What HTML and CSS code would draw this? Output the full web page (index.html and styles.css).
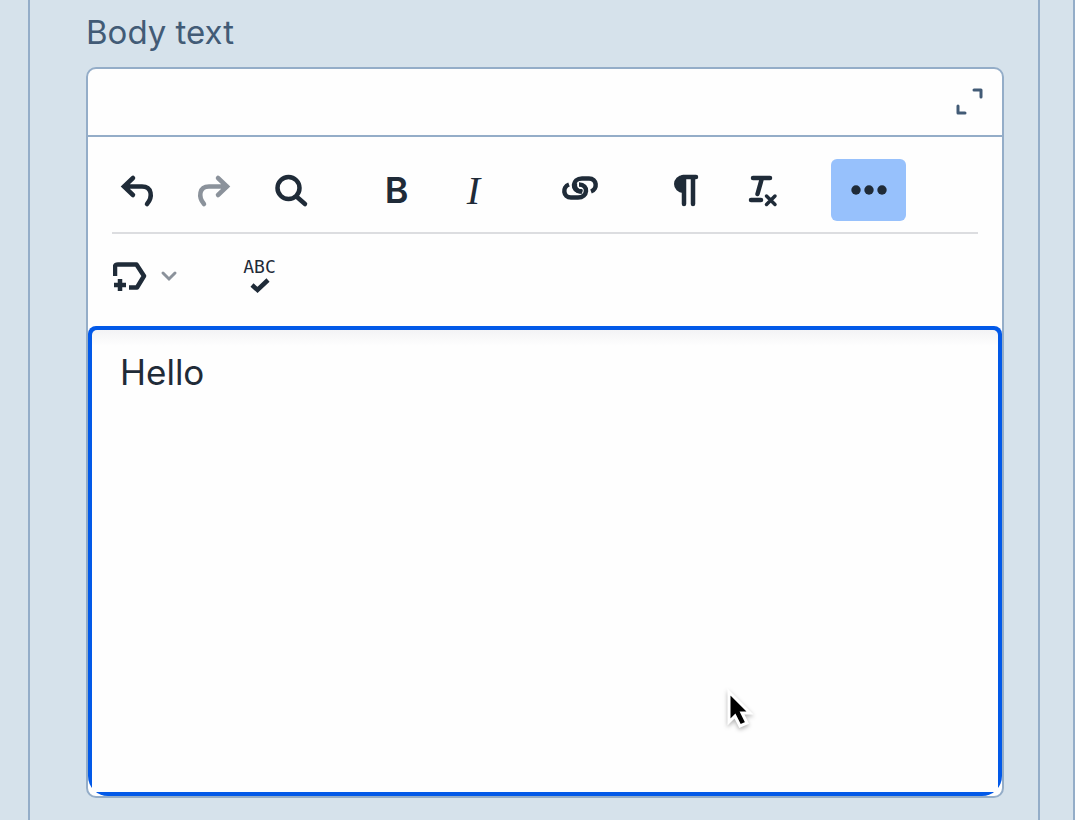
FILE: index.html
```html
<!DOCTYPE html>
<html lang="en">
<head>
    <meta charset="UTF-8">
    <meta name="viewport" content="width=device-width, initial-scale=1.0">
    <title>Body text</title>
    <link rel="stylesheet" href="styles.css">
</head>
<body>
  <main class="page">
    <section class="panel">
      <label class="field-label" for="body-text">Body text</label>
      <div class="editor">
        <div class="editor-header">
          <button class="expand" type="button" aria-label="Fullscreen">
            <svg width="28" height="28" viewBox="0 0 28 28" fill="none" stroke="#425b76" stroke-width="3" stroke-linecap="round" stroke-linejoin="round">
              <path d="M18 2h7v7M2 18v7h7"/>
            </svg>
          </button>
        </div>
        <div class="toolbar">
          <div class="toolbar-row">
            <div class="group">
              <button class="tool" type="button" aria-label="Undo">
                <svg width="36" height="36" viewBox="0 0 36 36" fill="none" stroke="#1f2b38" stroke-width="4.5" stroke-linecap="round">
                  <path d="M14 6L5 14.500L14 23M5 14.500H23C33 14.500 34 25 28 32"/>
                </svg>
              </button>
              <button class="tool" type="button" aria-label="Redo" disabled>
                <svg width="36" height="36" viewBox="0 0 36 36" fill="none" stroke="#8b929b" stroke-width="4.5" stroke-linecap="round">
                  <path d="M22 6L31 14.500L22 23M31 14.500H13C3 14.500 2 25 8 32"/>
                </svg>
              </button>
              <button class="tool" type="button" aria-label="Find">
                <svg width="36" height="36" viewBox="0 0 36 36" fill="none" stroke="#1f2b38" stroke-width="4.5" stroke-linecap="round">
                  <circle cx="15.500" cy="16" r="11"/>
                  <path d="M24 25L32 32"/>
                </svg>
              </button>
            </div>
            <div class="group">
              <button class="tool bold" type="button" aria-label="Bold">B</button>
              <button class="tool italic" type="button" aria-label="Italic">I</button>
            </div>
            <div class="group">
              <button class="tool" type="button" aria-label="Link">
                <svg width="38" height="28" viewBox="-1 0 38 28" fill="none" stroke="#1f2b38" stroke-width="4.5" stroke-linecap="butt">
                  <path d="M29 15.500C36 13 35 2.500 27 2.500H20C10 2.500 9 15.500 19 15.500H22"/>
                  <path d="M7 8.500C0 11 1 21.500 9 21.500H16C26 21.500 27 8.500 17 8.500" stroke="#fff" stroke-width="6.500"/>
                  <path d="M7 8.500C0 11 1 21.500 9 21.500H16C26 21.500 27 8.500 17 8.500"/>
                  <path d="M13 7C12 12 15 15.500 20 15.500"/>
                </svg>
              </button>
            </div>
            <div class="group">
              <button class="tool" type="button" aria-label="Show blocks">
                <svg width="30" height="36" viewBox="0 0 30 36" fill="none" stroke="#1f2b38" stroke-width="4.5" stroke-linecap="round">
                  <path d="M12 5H25M13 5V32M22 5V32"/>
                  <path d="M12 3H14V21H12A9 9 0 0 1 12 3z" fill="#1f2b38" stroke="none"/>
                </svg>
              </button>
              <button class="tool" type="button" aria-label="Clear formatting">
                <svg width="30" height="34" viewBox="0 0 30 34" fill="none" stroke="#1f2b38" stroke-width="4.5" stroke-linecap="round">
                  <path d="M5 5H22M14 5L9.500 21M3 27H13"/>
                  <path d="M18.500 23L27 31.500M27 23L18.500 31.500" stroke-width="3.5"/>
                </svg>
              </button>
            </div>
            <div class="group">
              <button class="tool active" type="button" aria-label="More" aria-expanded="true">
                <svg width="36" height="10" viewBox="0 0 36 10" fill="#1f2b38">
                  <circle cx="5" cy="5" r="4.700"/>
                  <circle cx="18" cy="5" r="4.700"/>
                  <circle cx="31" cy="5" r="4.700"/>
                </svg>
              </button>
            </div>
          </div>
          <div class="toolbar-row extra">
            <div class="group">
              <button class="tool split" type="button" aria-label="Personalize">
                <svg width="36" height="32" viewBox="2 0 36 32" fill="none" stroke="#1f2b38" stroke-width="4.5">
                  <path d="M4 16V7Q4 4.500 7 4.500H25.500L33 16L26 27.500H18" stroke-linejoin="round"/>
                  <path d="M9 19V31M3 25H15"/>
                </svg>
                <svg width="18" height="12" viewBox="0 0 18 12" fill="none" stroke="#8b929b" stroke-width="3" stroke-linecap="round">
                  <path d="M3 3L9 9L15 3"/>
                </svg>
              </button>
            </div>
            <div class="group">
              <button class="tool spell" type="button" aria-label="Spellcheck">
                <span>ABC</span>
                <svg width="20" height="16" viewBox="0 0 20 16" fill="none" stroke="#1f2b38" stroke-width="4.5">
                  <path d="M2 7L7.500 12L18 2"/>
                </svg>
              </button>
            </div>
          </div>
        </div>
        <div class="edit-area">
          <textarea id="body-text" class="edit-text" spellcheck="false">Hello</textarea>
        </div>
      </div>
    </section>
  </main>
  <svg class="pointer" width="32" height="46" viewBox="0 0 32 46">
    <path d="M5 4V34L11 28L16 38L23 35L18 25H26z" fill="#000" stroke="#fff" stroke-width="3"/>
  </svg>
</body>
</html>
```
FILE: styles.css
```css
* {
  box-sizing: border-box;
}

body {
  margin: 0;
  font-family: Inter, "Liberation Sans", sans-serif;
  color: #1f2b38;
  background-color: #d6e2eb;
}

.page {
  display: flex;
  min-height: 100vh;
  padding: 0 33px 0 28px;
  border-right: 2px solid #94adc8;
}

.panel {
  flex: 1;
  padding: 12px 34px 22px 56px;
  border: solid #94adc8;
  border-width: 0 2px;
}

.field-label {
  display: block;
  margin-bottom: 15px;
  font-size: 33px;
  line-height: 40px;
  color: #425b76;
}

.editor {
  border: 2px solid #94adc8;
  border-radius: 10px;
  background-color: #fefefe;
}

.editor-header {
  display: flex;
  justify-content: flex-end;
  align-items: center;
  height: 68px;
  padding-right: 18px;
  border-bottom: 2px solid #94adc8;
}

button {
  display: flex;
  align-items: center;
  justify-content: center;
  padding: 0;
  border: none;
  background: none;
  color: inherit;
  font-family: inherit;
  cursor: pointer;
}

.toolbar {
  padding: 0 24px;
}

.toolbar-row {
  display: flex;
  gap: 31px;
  padding: 22px 0 11px;
  margin-bottom: 11px;
  border-bottom: 2px solid #dcdde0;
}

.extra {
  padding: 0 0 19px;
  margin-bottom: 0;
  border-bottom: none;
}

.group {
  display: flex;
  gap: 2px;
}

.group:first-child {
  margin-left: -13px;
}

.tool {
  width: 75px;
  height: 62px;
  border-radius: 6px;
}

.active {
  background-color: #97c1fc;
}

.bold {
  font-size: 36px;
  font-weight: 600;
}

.italic {
  font-family: "Liberation Serif", serif;
  font-size: 40px;
  font-style: italic;
}

.split {
  gap: 11px;
  width: 92px;
}

.spell {
  flex-direction: column;
  gap: 2px;
  font-family: "DejaVu Sans Mono", monospace;
  font-size: 18px;
  line-height: 18px;
}

.edit-area {
  padding: 4px;
  border-radius: 8px 8px 20px 20px;
  background-color: #0259e8;
}

.edit-text {
  display: block;
  width: 100%;
  height: 462px;
  padding: 21px 28px;
  border: none;
  border-radius: 5px 5px 0 0;
  outline: none;
  resize: none;
  background: linear-gradient(#f3f3f5, #fefefe 16px);
  color: #1f2b38;
  font-family: inherit;
  font-size: 35px;
  line-height: 42px;
}

.pointer {
  position: absolute;
  left: 724px;
  top: 688px;
  filter: drop-shadow(0 2px 2px rgba(0, 0, 0, 0.3));
}
```
